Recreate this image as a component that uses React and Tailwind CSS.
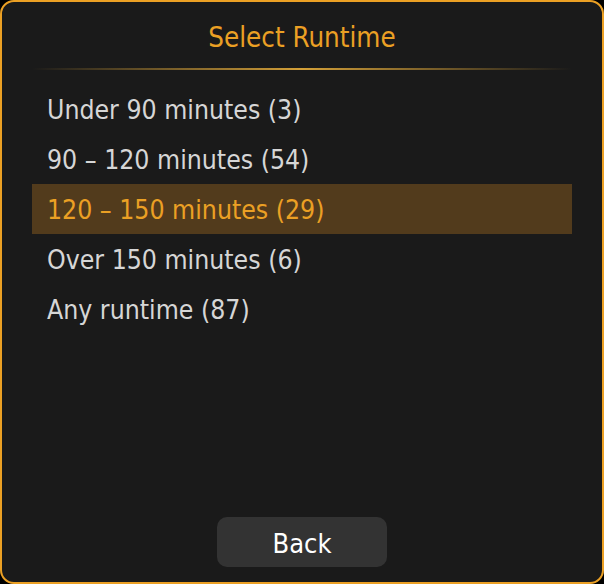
import React from "react";

const options = [
  { label: "Under 90 minutes (3)" },
  { label: "90 – 120 minutes (54)" },
  { label: "120 – 150 minutes (29)", active: true },
  { label: "Over 150 minutes (6)" },
  { label: "Any runtime (87)" },
];

const App = () => {
  return (
    <div
      className="w-[604px] h-[584px] bg-black"
      style={{ fontFamily: '"DejaVu Sans Condensed", "DejaVu Sans", sans-serif' }}
    >
      <div className="w-full h-full flex flex-col border-2 border-[#eba024] rounded-[14px] bg-[#1a1a1a] px-[30px]">
        <h2 className="text-[#eba024] text-[27.5px] text-center pt-[17px] leading-[36px]">
          Select Runtime
        </h2>
        <div className="mt-[13px] h-[2px] w-full bg-gradient-to-r from-transparent via-[#d4a038] to-transparent" />
        <div className="flex flex-col mt-[14px]">
          {options.map((o) => (
            <div
              key={o.label}
              className={
                o.active
                  ? "h-[50px] flex items-center px-[15px] pt-[1px] text-[26.4px] bg-[#523b1c] text-[#eba024]"
                  : "h-[50px] flex items-center px-[15px] pt-[1px] text-[26.4px] text-[#d6d6d6]"
              }
            >
              {o.label}
            </div>
          ))}
        </div>
        <div className="flex-1" />
        <div className="flex justify-center pb-[15px]">
          <button className="w-[170px] h-[50px] pt-[4px] rounded-[10px] bg-[#333333] text-white text-[27px]">
            Back
          </button>
        </div>
      </div>
    </div>
  );
};

export default App;
